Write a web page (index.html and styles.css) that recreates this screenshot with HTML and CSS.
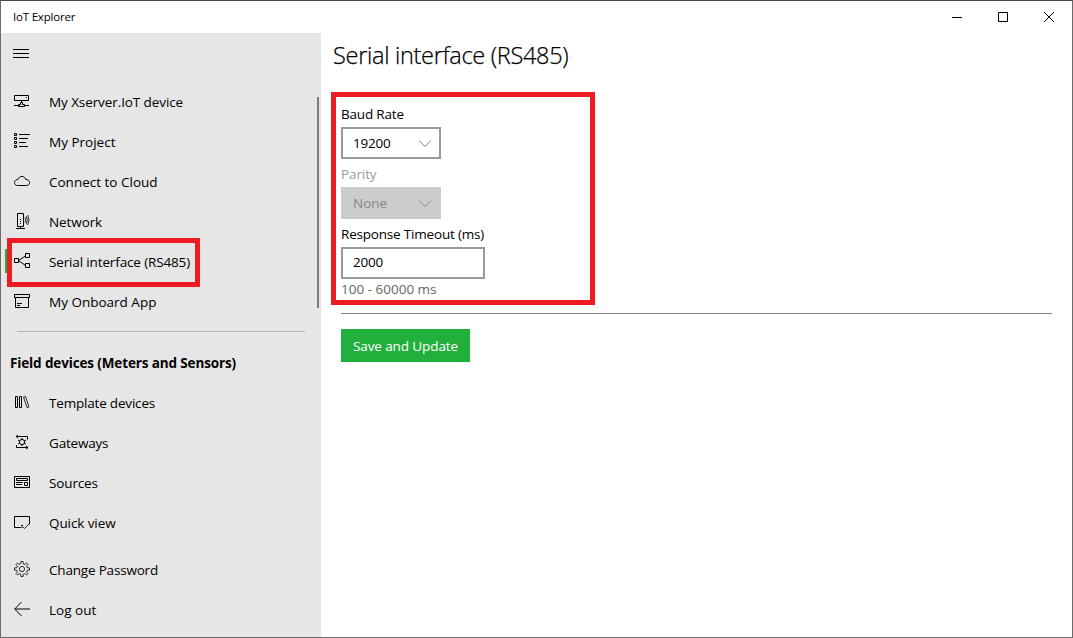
FILE: index.html
```html
<!DOCTYPE html>
<html lang="en">
<head>
<meta charset="utf-8">
<title>IoT Explorer</title>
<link rel="stylesheet" href="styles.css">
</head>
<body>
<div class="window">
  <header class="titlebar">
    <span class="app-name">IoT Explorer</span>
    <div class="controls">
      <svg class="control" viewBox="0 0 10 10"><path d="M0 5.5H10"/></svg>
      <svg class="control" viewBox="0 0 10 10"><path d="M.5 .5H9.5V9.5H.5Z"/></svg>
      <svg class="control" viewBox="0 0 10 10"><path d="M0 0L10 10M10 0L0 10"/></svg>
    </div>
  </header>
  <div class="content">
    <aside class="sidebar">
      <svg class="icon menu" viewBox="0 0 16 16"><path d="M0 3.5H16M0 7.5H16M0 11.5H16"/></svg>
      <nav class="nav primary">
        <a class="item"><svg class="icon" viewBox="0 0 16 16"><path d="M.5 1.5H14.5V6.5H.5ZM12 3.5H13M7.5 6.5V9M0 11.5H5.5M10 11.5H15M4.5 12.5V10.5H6.5V8.5H8.5V10.5H10.5V12.5Z"/></svg><span class="tight">My Xserver.IoT device</span></a>
        <a class="item"><svg class="icon" viewBox="0 0 16 16"><path d="M.5-.5H2.5V1.5H.5ZM.5 3.5H2.5V5.5H.5ZM.5 7.5H2.5V9.5H.5ZM.5 11.5H2.5V13.5H.5ZM5 .5H16M5 4.5H14M5 8.5H12M5 12.5H14"/></svg><span>My Project</span></a>
        <a class="item"><svg class="icon" viewBox="0 0 16 16"><path d="M3.5 11.5C1.5 11.5.5 10.2.5 8.5S2 5.5 4 5.5C4.5 3.5 6 2.5 8 2.5C10 2.5 11.3 3.7 11.7 5.5C14 5.2 15.5 6.8 15.5 8.5S14.5 11.5 12.5 11.5Z"/></svg><span>Connect to Cloud</span></a>
        <a class="item"><svg class="icon" viewBox="0 0 16 16"><path d="M3.5-.5H9.5V12.5H3.5ZM6.5 12.5V14.5M2 14.5H11M6 5.5H7M6 7.5H7M6 9.5H7"/><path class="thin" d="M11 3.5Q12.5 6 11 8.5M12.3 2.2Q14.3 6 12.3 9.8M13.6 1Q16.5 6 13.6 11"/></svg><span class="tight">Network</span></a>
        <a class="item selected"><svg class="icon" viewBox="0 0 16 16"><path d="M.5 4.5H4.5V8.5H.5ZM11.5-.5H15.5V3.5H11.5ZM11.5 9.5H15.5V13.5H11.5Z"/><path d="M4.5 6.5L11.5 2M4.5 6.5L11.5 11.5"/></svg><span class="tighter">Serial interface (RS485)</span></a>
        <a class="item"><svg class="icon" viewBox="0 0 16 16"><path d="M.5 .5H15.5V3.5H.5ZM1.5 3.5V13.5H14.5V3.5M3 9.5H8M3 11.5H6"/></svg><span>My Onboard App</span></a>
      </nav>
      <hr class="divider">
      <h2 class="section">Field devices (Meters and Sensors)</h2>
      <nav class="nav">
        <a class="item"><svg class="icon" viewBox="0 0 16 16"><path d="M1.5 1.5H3.5V12.5H1.5ZM5.5 1.5H7.5V12.5H5.5Z"/><path class="thin" d="M9.5 2L11.5 1.5L15 12L13 12.5Z"/></svg><span class="tightest">Template devices</span></a>
        <a class="item"><svg class="icon" viewBox="0 0 16 16"><path d="M2 1.5H13.5V4.5M4 0L2 1.5L4 3M2.5 10V12.5H14M12 11L14 12.5L12 14"/><circle cx="8" cy="7" r="2.6"/><path d="M8 3V4.4M8 9.6V11M4 5L5.8 6M10.2 8L12 9M4 9L5.8 8M10.2 6L12 5"/></svg><span class="tightest">Gateways</span></a>
        <a class="item"><svg class="icon" viewBox="0 0 16 16"><path d="M.5 1.5H15.5V12.5H.5ZM2.5 3.5H13.5V5.5H2.5ZM2 7.5H9M2 9.5H8M10.5 7.5H13.5V10.5H10.5Z"/></svg><span class="tighter">Sources</span></a>
        <a class="item"><svg class="icon" viewBox="0 0 16 16"><path d="M6.5 12.5H.5V1.5H15.5V9.5M7 10.5H9"/><path class="thin" d="M6.5 12.5H8.5M8.5 11.5L10.5 13.5L15.5 8.5"/></svg><span class="tight">Quick view</span></a>
      </nav>
      <nav class="nav footer">
        <a class="item"><svg class="icon" viewBox="0 0 16 16"><path class="thin" d="M6.7 1.8L6.9-.5H9.1L9.3 1.8L10.8 2.4L12.5 1L14 2.5L12.6 4.2L13.2 5.7L15.5 5.9V8.1L13.2 8.3L12.6 9.8L14 11.5L12.5 13L10.8 11.6L9.3 12.2L9.1 14.5H6.9L6.7 12.2L5.2 11.6L3.5 13L2 11.5L3.4 9.8L2.8 8.3L.5 8.1V5.9L2.8 5.7L3.4 4.2L2 2.5L3.5 1L5.2 2.4Z"/><circle class="thin" cx="8" cy="7" r="2.6"/></svg><span class="tightest">Change Password</span></a>
        <a class="item"><svg class="icon" viewBox="0 0 16 16"><path d="M16 7H1M7.5 0L.7 7L7.5 14"/></svg><span>Log out</span></a>
      </nav>
      <div class="scrollbar"></div>
      <div class="highlight nav-highlight"></div>
    </aside>
    <main class="main">
      <h1 class="heading">Serial interface (RS485)</h1>
      <section class="settings">
        <label class="label tightest">Baud Rate</label>
        <div class="field combo"><span class="tightest">19200</span><svg class="chevron" viewBox="0 0 12 7"><path d="M0 .5L6 6.5L12 .5"/></svg></div>
        <label class="label muted">Parity</label>
        <div class="field combo disabled"><span>None</span><svg class="chevron" viewBox="0 0 12 7"><path d="M0 .5L6 6.5L12 .5"/></svg></div>
        <label class="label tightest">Response Timeout (ms)</label>
        <div class="field input"><span class="tightest">2000</span></div>
        <div class="hint">100 - 60000 ms</div>
      </section>
      <hr class="rule">
      <button class="save">Save and Update</button>
    </main>
  </div>
</div>
</body>
</html>
```
FILE: styles.css
```css
* { box-sizing: border-box; }
body { margin: 0; font: 13.5px/20px "Open Sans", "Noto Sans", sans-serif; color: #000; }
.window { width: 1073px; height: 638px; border: 1px solid #6b6b6b; border-top-color: #444; background: #fff; display: flex; flex-direction: column; overflow: hidden; }
.titlebar { height: 32px; flex: none; display: flex; justify-content: space-between; align-items: center; padding: 0 18px 0 12px; }
.app-name { font-size: 11.5px; letter-spacing: -.2px; }
.controls { display: flex; gap: 36px; }
.control { width: 10px; height: 10px; fill: none; stroke: #000; overflow: visible; }
.content { display: flex; flex: 1; min-height: 0; }
.sidebar { position: relative; width: 320px; flex: none; background: #e6e6e6; }
.icon { display: block; width: 16px; height: 16px; flex: none; fill: none; stroke: #000; stroke-width: 1; overflow: visible; }
.thin { stroke-width: .8; }
.tight { letter-spacing: -.09px; }
.tighter { letter-spacing: -.14px; }
.tightest { letter-spacing: -.19px; }
.menu { margin: 13px 0 0 12px; }
.nav { display: flex; flex-direction: column; }
.primary { padding-top: 20px; }
.item { display: flex; align-items: center; height: 40px; padding-left: 13px; gap: 19px; white-space: nowrap; }
.selected { background: linear-gradient(#22b03c, #22b03c) 4px 7px / 3px 24px no-repeat; }
.divider { height: 1px; border: 0; background: #b5b5b5; margin: 9px 16px 0; }
.section { margin: 0; padding: 21px 0 10px 9px; font-size: 13.5px; line-height: 20px; font-weight: 700; letter-spacing: -.13px; white-space: nowrap; }
.footer { margin-top: 7px; }
.scrollbar { position: absolute; left: 316px; top: 64px; width: 2px; height: 211px; background: #7a7a7a; }
.highlight { position: absolute; border: 5px solid #ed1c24; }
.nav-highlight { left: 6px; top: 205px; width: 193px; height: 49px; }
.main { flex: 1; padding: 4px 20px 0 10px; }
.heading { margin: 0 0 0 2px; height: 36px; font-size: 23.5px; line-height: 36px; font-weight: 300; letter-spacing: -.3px; -webkit-text-stroke: .25px #000; white-space: nowrap; }
.settings { width: 264px; height: 213px; margin-top: 19px; padding: 7px 5px 0; border: 5px solid #ed1c24; white-space: nowrap; }
.label { display: block; height: 20px; }
.field { display: flex; align-items: center; height: 32px; border: 2px solid #999; padding: 0 10px; margin: 3px 0 5px; }
.combo { width: 100px; justify-content: space-between; padding-right: 8px; }
.input { width: 144px; margin-bottom: 0; padding-bottom: 2px; }
.muted { color: #999; letter-spacing: -.1px; }
.disabled { background: #ccc; border-color: #ccc; color: #888; }
.chevron { width: 12px; height: 7px; fill: none; stroke: #777; overflow: visible; }
.disabled .chevron { stroke: #888; }
.hint { color: #666; }
.rule { height: 1px; border: 0; margin: 8px 0 0 10px; background: #808080; }
.save { display: block; width: 129px; height: 33px; margin: 15px 0 0 10px; padding: 0; border: 0; background: #22b03c; color: #fff; font: inherit; letter-spacing: -.1px; white-space: nowrap; }
```
